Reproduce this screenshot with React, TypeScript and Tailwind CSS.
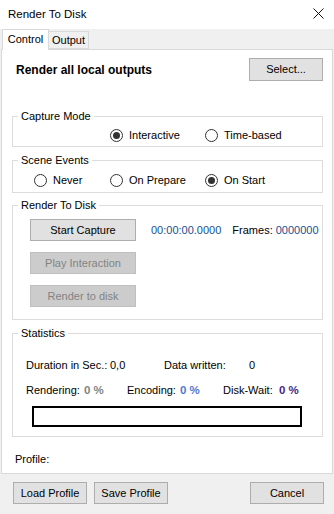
import React from 'react';

const Radio = ({ label, checked, width }: { label: string; checked?: boolean; width?: string }) => (
  <div className={`flex items-center h-[16px] ${width ?? ''}`}>
    <span className="w-[13px] h-[13px] rounded-full border border-[#333333] bg-white flex items-center justify-center shrink-0">
      {checked && <span className="w-[7px] h-[7px] rounded-full bg-[#333333]" />}
    </span>
    <span className="ml-[6px] leading-[13px]">{label}</span>
  </div>
);

const Btn = ({ children, disabled, className }: { children: React.ReactNode; disabled?: boolean; className?: string }) => (
  <div
    className={`h-[22px] flex items-center justify-center border leading-[13px] ${
      disabled ? 'bg-[#cccccc] border-[#bfbfbf] text-[#838383]' : 'bg-[#e1e1e1] border-[#adadad] text-black'
    } ${className ?? ''}`}
  >
    {children}
  </div>
);

const Group = ({ title, className, children }: { title: string; className?: string; children: React.ReactNode }) => (
  <fieldset className={`ml-[10px] w-[311px] border border-[#dcdcdc] p-0 ${className ?? ''}`}>
    <legend className="ml-[5px] px-[3px] leading-[13px]">{title}</legend>
    {children}
  </fieldset>
);

export default function App() {
  return (
    <div className="w-[334px] h-[514px] bg-[#f0f0f0] text-[11px] text-black font-['Liberation_Sans',Arial,sans-serif] overflow-hidden">
      {/* Title bar */}
      <div className="h-[29px] bg-white flex items-center justify-between pl-[8px] pr-[10px]">
        <span className="text-[11.5px]">Render To Disk</span>
        <svg width="11" height="11" viewBox="0 0 11 11" className="mb-[2px]">
          <path d="M0.5 0.5 L10.5 10.5 M10.5 0.5 L0.5 10.5" stroke="#111" strokeWidth="1" />
        </svg>
      </div>

      {/* Tabs */}
      <div className="h-[20px] flex items-start pl-[2px] relative z-10">
        <div className="h-[21px] w-[47px] bg-white border border-b-0 border-[#d9d9d9] flex items-center justify-center leading-[13px] pb-[2px]">
          Control
        </div>
        <div className="mt-[2px] h-[18px] w-[40px] bg-[#f0f0f0] border border-l-0 border-[#d9d9d9] flex items-center justify-center leading-[13px]">
          Output
        </div>
      </div>

      {/* Tab page */}
      <div className="ml-[1px] w-[332px] h-[425px] bg-white border border-[#d9d9d9]">
        <div className="mt-[8px] h-[23px] flex items-center justify-between pl-[14px] pr-[9px]">
          <span className="font-bold text-[12px]">Render all local outputs</span>
          <Btn className="w-[74px] h-[23px]">Select...</Btn>
        </div>

        <Group title="Capture Mode" className="mt-[29px]">
          <div className="flex pl-[97px] pt-[4px] pb-[3px]">
            <Radio label="Interactive" checked width="w-[95px]" />
            <Radio label="Time-based" />
          </div>
        </Group>

        <Group title="Scene Events" className="mt-[7px]">
          <div className="flex pl-[21px] pt-[5px] pb-[4px]">
            <Radio label="Never" width="w-[76px]" />
            <Radio label="On Prepare" width="w-[95px]" />
            <Radio label="On Start" checked />
          </div>
        </Group>

        <Group title="Render To Disk" className="mt-[6px]">
          <div className="flex flex-col gap-[11px] pl-[17px] pt-[7px] pb-[12px]">
            <div className="flex items-center">
              <Btn className="w-[106px]">Start Capture</Btn>
              <span className="ml-[15px] text-[#174f8f]">00:00:00.0000</span>
              <span className="ml-[11px]">Frames:</span>
              <span className="ml-[3px] text-[#174f8f]">0000000</span>
            </div>
            <Btn disabled className="w-[106px]">Play Interaction</Btn>
            <Btn disabled className="w-[106px]">Render to disk</Btn>
          </div>
        </Group>

        <Group title="Statistics" className="mt-[7px]">
          <div className="pl-[13px] pt-[19px] pb-[9px] leading-[13px]">
            <div className="flex">
              <span className="w-[84px]">Duration in Sec.:</span>
              <span className="w-[54px]">0,0</span>
              <span className="w-[85px]">Data written:</span>
              <span>0</span>
            </div>
            <div className="flex items-baseline mt-[12px]">
              <span className="w-[58px]">Rendering:</span>
              <span className="w-[43px] font-bold text-[11.5px] text-[#7a8686]">0 %</span>
              <span className="w-[53px]">Encoding:</span>
              <span className="w-[43px] font-bold text-[11.5px] text-[#4a7bd0]">0 %</span>
              <span className="w-[56px]">Disk-Wait:</span>
              <span className="font-bold text-[11.5px] text-[#4b1f86]">0 %</span>
            </div>
            <div className="mt-[9px] ml-[6px] w-[270px] h-[21px] border-2 border-black bg-white" />
          </div>
        </Group>

        <div className="mt-[16px] pl-[13px] leading-[13px]">Profile:</div>
      </div>

      {/* Bottom buttons */}
      <div className="mt-[8px] flex pl-[13px]">
        <Btn className="w-[74px]">Load Profile</Btn>
        <Btn className="w-[74px] ml-[7px]">Save Profile</Btn>
        <Btn className="w-[74px] ml-[82px]">Cancel</Btn>
      </div>
    </div>
  );
}
